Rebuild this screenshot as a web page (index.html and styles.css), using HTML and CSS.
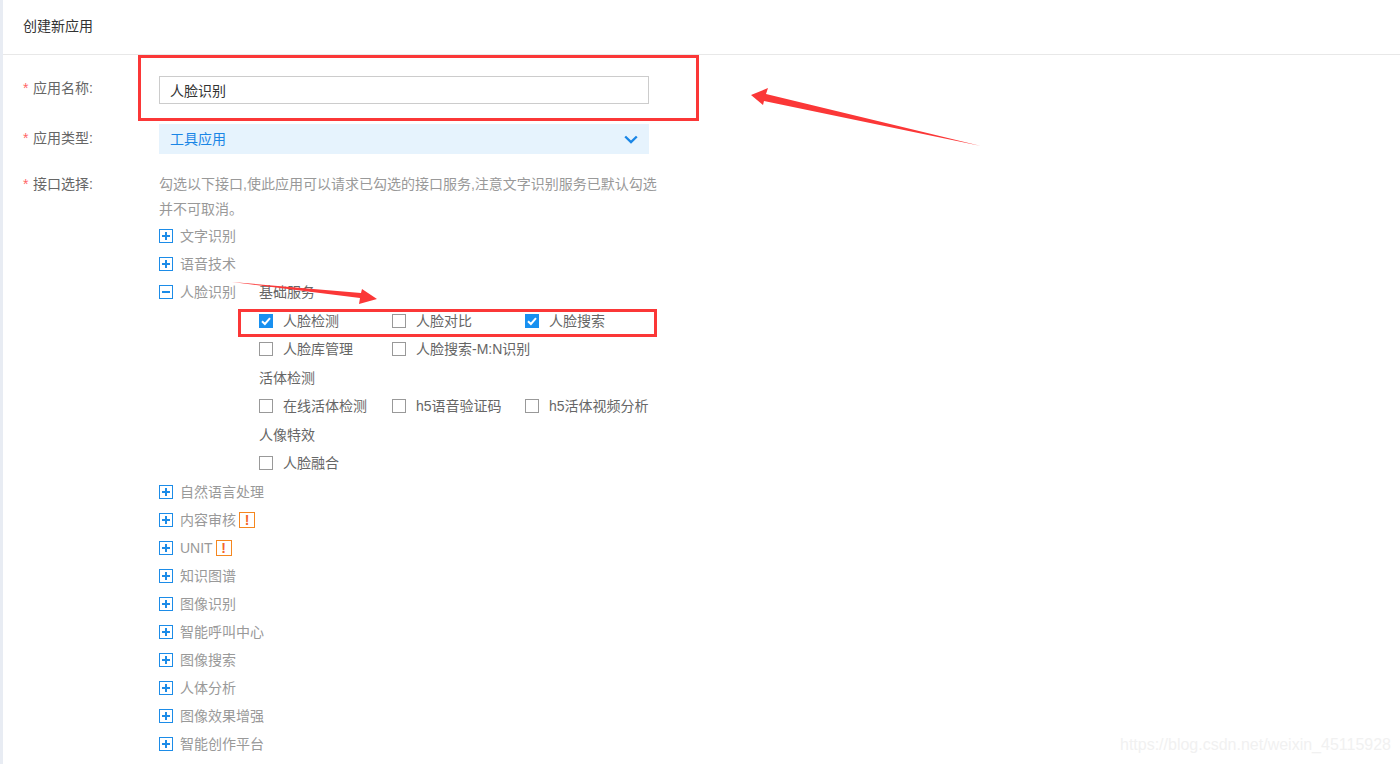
FILE: index.html
```html
<!DOCTYPE html>
<html lang="zh-CN">
<head>
  <meta charset="UTF-8">
  <meta name="viewport" content="width=device-width, initial-scale=1.0">
  <title>创建新应用</title>
  <link rel="stylesheet" href="styles.css">
</head>
<body>
  <div class="page">
    <div class="page-title">创建新应用</div>

    <div class="form">
      <div class="form-row row-name">
        <label class="form-label"><span class="star">*</span>应用名称:</label>
        <div class="text-input">人脸识别</div>
      </div>

      <div class="form-row row-type">
        <label class="form-label"><span class="star">*</span>应用类型:</label>
        <div class="select">
          <span>工具应用</span>
          <svg class="chevron" width="14" height="9" viewBox="0 0 14 9"><path d="M1.2 1.5 L7 7 L12.8 1.5" fill="none" stroke="#1a86e6" stroke-width="2.4"/></svg>
        </div>
      </div>

      <div class="form-row row-api">
        <label class="form-label"><span class="star">*</span>接口选择:</label>
        <div class="api-box">
          <p class="hint">勾选以下接口,使此应用可以请求已勾选的接口服务,注意文字识别服务已默认勾选并不可取消。</p>

          <div class="tree-row"><i class="toggle plus"></i><span class="tree-name">文字识别</span></div>
          <div class="tree-row"><i class="toggle plus"></i><span class="tree-name">语音技术</span></div>

          <div class="tree-row open">
            <i class="toggle"></i><span class="tree-name">人脸识别</span>
            <div class="sub">
              <div class="sub-title">基础服务</div>
              <div class="check-row">
                <span class="check on"><i class="box"><svg width="14" height="14" viewBox="0 0 14 14"><path d="M3 7.2 L5.9 10 L11 4.2" fill="none" stroke="#fff" stroke-width="2"/></svg></i>人脸检测</span>
                <span class="check"><i class="box"></i>人脸对比</span>
                <span class="check on"><i class="box"><svg width="14" height="14" viewBox="0 0 14 14"><path d="M3 7.2 L5.9 10 L11 4.2" fill="none" stroke="#fff" stroke-width="2"/></svg></i>人脸搜索</span>
              </div>
              <div class="check-row">
                <span class="check"><i class="box"></i>人脸库管理</span>
                <span class="check"><i class="box"></i>人脸搜索-M:N识别</span>
              </div>
              <div class="sub-title">活体检测</div>
              <div class="check-row">
                <span class="check"><i class="box"></i>在线活体检测</span>
                <span class="check"><i class="box"></i>h5语音验证码</span>
                <span class="check"><i class="box"></i>h5活体视频分析</span>
              </div>
              <div class="sub-title">人像特效</div>
              <div class="check-row">
                <span class="check"><i class="box"></i>人脸融合</span>
              </div>
            </div>
          </div>

          <div class="tree-row"><i class="toggle plus"></i><span class="tree-name">自然语言处理</span></div>
          <div class="tree-row"><i class="toggle plus"></i><span class="tree-name">内容审核</span><b class="warn">!</b></div>
          <div class="tree-row"><i class="toggle plus"></i><span class="tree-name">UNIT</span><b class="warn">!</b></div>
          <div class="tree-row"><i class="toggle plus"></i><span class="tree-name">知识图谱</span></div>
          <div class="tree-row"><i class="toggle plus"></i><span class="tree-name">图像识别</span></div>
          <div class="tree-row"><i class="toggle plus"></i><span class="tree-name">智能呼叫中心</span></div>
          <div class="tree-row"><i class="toggle plus"></i><span class="tree-name">图像搜索</span></div>
          <div class="tree-row"><i class="toggle plus"></i><span class="tree-name">人体分析</span></div>
          <div class="tree-row"><i class="toggle plus"></i><span class="tree-name">图像效果增强</span></div>
          <div class="tree-row"><i class="toggle plus"></i><span class="tree-name">智能创作平台</span></div>
        </div>
      </div>
    </div>

    <!-- screenshot annotations drawn on top -->
    <div class="mark mark-name"></div>
    <div class="mark mark-checks"></div>
    <svg class="arrows" width="1400" height="764" viewBox="0 0 1400 764">
      <polygon fill="#fb3737" points="751,95 768,88 766,94 981,146 764,101 763,105"/>
      <polygon fill="#fb3737" points="232,282 361,293 362,289 377,299 359,304 360,298"/>
    </svg>

    <div class="watermark">https://blog.csdn.net/weixin_45115928</div>
  </div>
</body>
</html>
```

FILE: styles.css
```css
html, body {
  margin: 0;
  height: 100%;
  overflow: hidden;
}
body {
  font-family: "Liberation Sans", "Noto Sans CJK SC", sans-serif;
  font-size: 14px;
  color: #666;
  background: #fff;
}
.page {
  position: relative;
  height: 764px;
  border-left: 3px solid #e8ecf3;
  box-sizing: border-box;
}
.page-title {
  height: 54px;
  line-height: 53px;
  padding-left: 20px;
  color: #333;
  border-bottom: 1px solid #e8e8e8;
}
.form {
  padding-left: 20px;
}
.form-row {
  display: flex;
}
.form-label {
  width: 136px;
  flex-shrink: 0;
}
.star {
  display: inline-block;
  width: 10px;
  color: #f66;
}
.row-name {
  margin-top: 21px;
  line-height: 24px;
}
.row-name .form-label {
  margin-top: 0;
}
.text-input {
  width: 490px;
  height: 28px;
  line-height: 28px;
  padding-left: 10px;
  box-sizing: border-box;
  border: 1px solid #ccc;
  color: #333;
}
.row-type {
  margin-top: 20px;
  line-height: 28px;
}
.select {
  width: 490px;
  height: 30px;
  line-height: 30px;
  padding: 0 11px;
  box-sizing: border-box;
  display: flex;
  justify-content: space-between;
  align-items: center;
  background: #e6f3fd;
  color: #1a86e6;
}
.row-api {
  margin-top: 18px;
  line-height: 25px;
}
.api-box {
  width: 500px;
}
.hint {
  margin: 0 0 0 0;
  color: #999;
  line-height: 25px;
}
.tree-row {
  display: flex;
  align-items: center;
  height: 28px;
  line-height: 28px;
  color: #999;
}
.tree-row.open {
  height: auto;
  align-items: flex-start;
}
.toggle {
  position: relative;
  width: 14px;
  height: 14px;
  flex-shrink: 0;
  box-sizing: border-box;
  border: 1px solid #1c8ce8;
  margin-right: 7px;
}
.tree-row.open .toggle {
  margin-top: 7px;
}
.toggle::before {
  content: "";
  position: absolute;
  left: 2px;
  top: 5px;
  width: 8px;
  height: 2px;
  background: #1c8ce8;
}
.toggle.plus::after {
  content: "";
  position: absolute;
  left: 5px;
  top: 2px;
  width: 2px;
  height: 8px;
  background: #1c8ce8;
}
.tree-name {
  white-space: nowrap;
}
.warn {
  width: 16px;
  height: 16px;
  margin-left: 3px;
  box-sizing: border-box;
  border: 1px solid #f5871f;
  color: #f5662a;
  font-size: 14px;
  line-height: 14px;
  text-align: center;
}
.sub {
  margin-left: 23px;
  flex-shrink: 0;
  width: 410px;
}
.sub-title {
  height: 28.5px;
  line-height: 28px;
  color: #666;
}
.check-row {
  display: flex;
  height: 28.5px;
  line-height: 28px;
  color: #666;
}
.check {
  width: 133px;
  display: flex;
  align-items: center;
  white-space: nowrap;
}
.box {
  width: 14px;
  height: 14px;
  flex-shrink: 0;
  box-sizing: border-box;
  border: 1px solid #999;
  margin-right: 10px;
  overflow: hidden;
}
.box svg {
  display: block;
  margin: -1px;
}
.check.on .box {
  background: #1890f0;
  border-color: #1890f0;
}
.mark {
  position: absolute;
  box-sizing: border-box;
  border: 3px solid #fb3737;
}
.mark-name {
  left: 135px;
  top: 55px;
  width: 561px;
  height: 66px;
}
.mark-checks {
  left: 235px;
  top: 309px;
  width: 419px;
  height: 28px;
}
.arrows {
  position: absolute;
  left: -3px;
  top: 0;
  pointer-events: none;
}
.watermark {
  position: absolute;
  right: 9px;
  top: 736px;
  font-size: 16px;
  line-height: 18px;
  color: #f1f1f1;
}
```
